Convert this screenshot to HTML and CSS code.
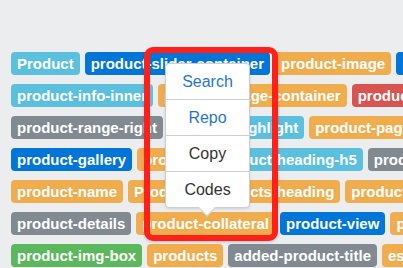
FILE: index.html
```html
<!DOCTYPE html>
<html lang="en">
<head>
    <meta charset="UTF-8">
    <title>Tags</title>
    <link rel="stylesheet" href="styles.css">
</head>
<body>
    <div class="tags">
        <div class="row">
            <span class="tag tag-info">Product</span>
            <span class="tag tag-primary">product-slider-container</span>
            <span class="tag tag-warning">product-image</span>
            <span class="tag tag-primary">product-slider</span>
        </div>
        <div class="row">
            <span class="tag tag-info">product-info-inner</span>
            <span class="tag tag-warning">product-image-container</span>
            <span class="tag tag-danger">product-info</span>
        </div>
        <div class="row">
            <span class="tag tag-default">product-range-right</span>
            <span class="tag tag-info">product-highlight</span>
            <span class="tag tag-warning">product-page</span>
        </div>
        <div class="row">
            <span class="tag tag-primary">product-gallery</span>
            <span class="tag tag-warning">product</span>
            <span class="tag tag-info">product-heading-h5</span>
            <span class="tag tag-default">product-list</span>
        </div>
        <div class="row">
            <span class="tag tag-warning">product-name</span>
            <span class="tag tag-warning">Product</span>
            <span class="tag tag-warning">products-heading</span>
            <span class="tag tag-warning">product-price</span>
        </div>
        <div class="row">
            <span class="tag tag-default">product-details</span>
            <span class="tag tag-warning">product-collateral</span>
            <span class="tag tag-primary">product-view</span>
            <span class="tag tag-warning">product-box</span>
        </div>
        <div class="row">
            <span class="tag tag-success">product-img-box</span>
            <span class="tag tag-warning">products</span>
            <span class="tag tag-default">added-product-title</span>
            <span class="tag tag-warning">essential</span>
        </div>
    </div>

    <div class="menu">
        <div class="menu-item link">Search</div>
        <div class="menu-item link">Repo</div>
        <div class="menu-item">Copy</div>
        <div class="menu-item">Codes</div>
    </div>

    <div class="highlight"></div>
</body>
</html>
```

FILE: styles.css
```css
body {
    margin: 0;
    background: #ebedef;
    overflow: hidden;
    font-family: "Liberation Sans", Arial, sans-serif;
}
.tags {
    padding: 52px 0 0 11px;
}
.row {
    display: flex;
    gap: 5px;
    margin-bottom: 9px;
    white-space: nowrap;
}
.tag {
    flex: none;
    height: 23px;
    line-height: 23px;
    padding: 0 6px;
    border-radius: 4px;
    color: #fff;
    font-size: 15px;
    font-weight: bold;
}
.tag-info { background: #5bc0de; }
.tag-primary { background: #0275d8; }
.tag-warning { background: #f0ad4e; }
.tag-danger { background: #d9534f; }
.tag-default { background: #818a91; }
.tag-success { background: #5cb85c; }

.menu {
    position: absolute;
    left: 165px;
    top: 63px;
    width: 83px;
    background: #fff;
    border: 1px solid #cfcfcf;
    border-radius: 4px;
    box-shadow: 0 1px 3px rgba(0, 0, 0, 0.12);
}
.menu::after {
    content: "";
    position: absolute;
    left: 35px;
    bottom: -7px;
    width: 11px;
    height: 11px;
    background: #fff;
    border-right: 1px solid #cfcfcf;
    border-bottom: 1px solid #cfcfcf;
    transform: rotate(45deg);
}
.menu-item {
    height: 35px;
    line-height: 35px;
    text-align: center;
    font-size: 16px;
    color: #333;
    border-top: 1px solid #cfcfcf;
}
.menu-item:first-child {
    border-top: none;
}
.menu-item.link {
    color: #1f78cf;
}

.highlight {
    position: absolute;
    left: 144px;
    top: 47px;
    width: 134px;
    height: 194px;
    box-sizing: border-box;
    border: 6px solid #ff2119;
    border-radius: 9px;
    box-shadow: 0 1px 3px rgba(0, 0, 0, 0.2);
}
```
